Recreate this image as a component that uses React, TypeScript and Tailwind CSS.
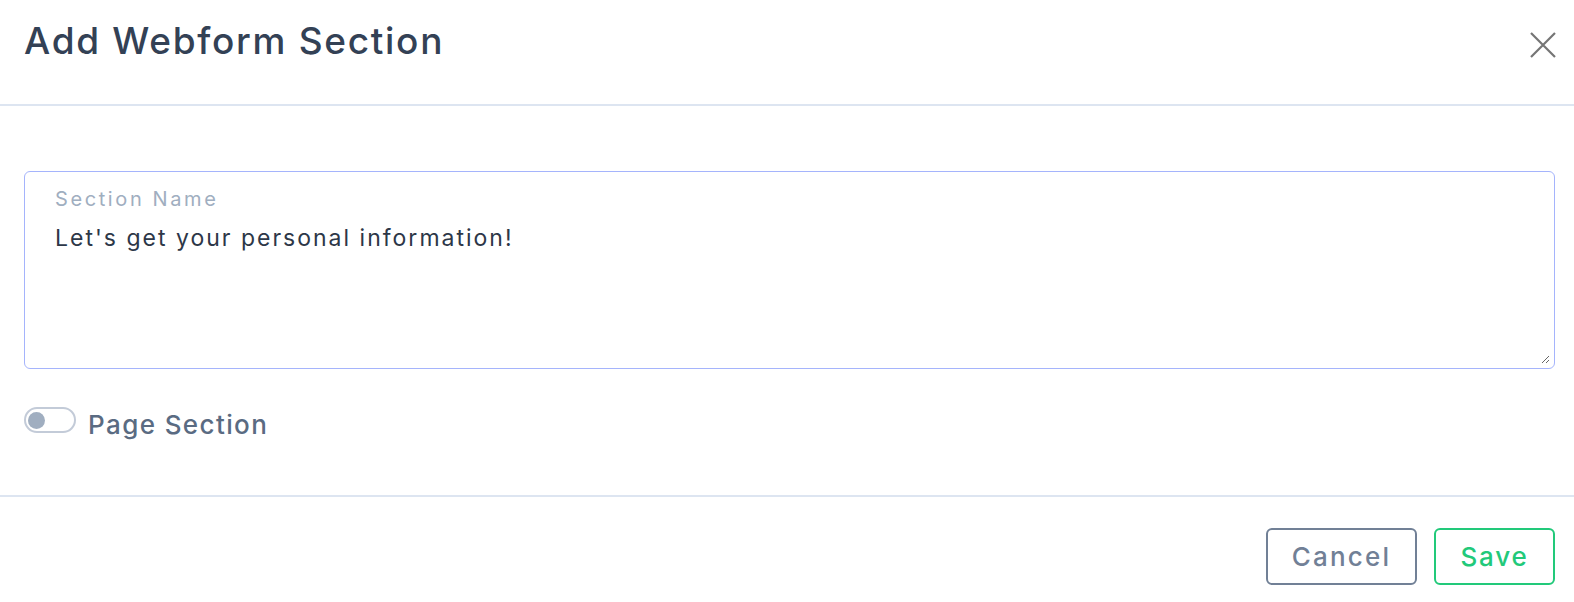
import React, { useState } from 'react';

export default function App() {
  const [name, setName] = useState("Let's get your personal information!");
  const [pageSection, setPageSection] = useState(false);

  return (
    <div className="w-full min-h-screen bg-white font-['Inter','Liberation_Sans',sans-serif]">
      <div className="flex items-start justify-between h-[106px] border-b-2 border-[#dde5f1] pl-[24px] pr-[18px]">
        <h1 className="mt-[19px] text-[37px] leading-[44px] font-medium text-[#334155] tracking-[1.7px]">
          Add Webform Section
        </h1>
        <button className="mt-[32px] text-[#757575]" aria-label="Close">
          <svg width="26" height="26" viewBox="0 0 26 26" fill="none" stroke="currentColor" strokeWidth="2.2">
            <path d="M1 1L25 25M25 1L1 25" />
          </svg>
        </button>
      </div>

      <div className="pt-[65px] pl-[24px] pr-[19px] pb-[55px]">
        <div className="h-[198px] border-[1.5px] border-[#a5b4fc] rounded-[6px] pt-[15px] pl-[30px] pr-[4px] pb-[4px] flex flex-col">
          <label className="text-[20px] leading-[24px] text-[#a0aec0] tracking-[2.6px]">Section Name</label>
          <textarea
            value={name}
            onChange={(e) => setName(e.target.value)}
            className="flex-1 mt-[13px] text-[23px] leading-[28px] text-[#2d3748] tracking-[2px] outline-none resize"
          />
        </div>

        <div className="mt-[38px] flex items-start gap-[12px]">
          <button
            onClick={() => setPageSection(!pageSection)}
            className="w-[52px] h-[26px] rounded-full border-2 border-[#c3cbd8] flex items-center px-[2px]"
          >
            <span className="w-[17px] h-[17px] rounded-full bg-[#a0aec0]" />
          </button>
          <span className="mt-[3px] text-[26px] leading-[30px] font-medium text-[#5a6b82] tracking-[1.4px]">
            Page Section
          </span>
        </div>
      </div>

      <div className="border-t-2 border-[#dde5f1] flex justify-end gap-[17px] pt-[31px] pr-[19px]">
        <button className="w-[151px] h-[57px] rounded-[6px] border-2 border-[#718096] text-[26px] font-medium text-[#718096] tracking-[2.2px]">
          Cancel
        </button>
        <button className="w-[121px] h-[57px] rounded-[6px] border-2 border-[#22c97a] text-[26px] font-medium text-[#22c97a] tracking-[1.8px]">
          Save
        </button>
      </div>
    </div>
  );
}
